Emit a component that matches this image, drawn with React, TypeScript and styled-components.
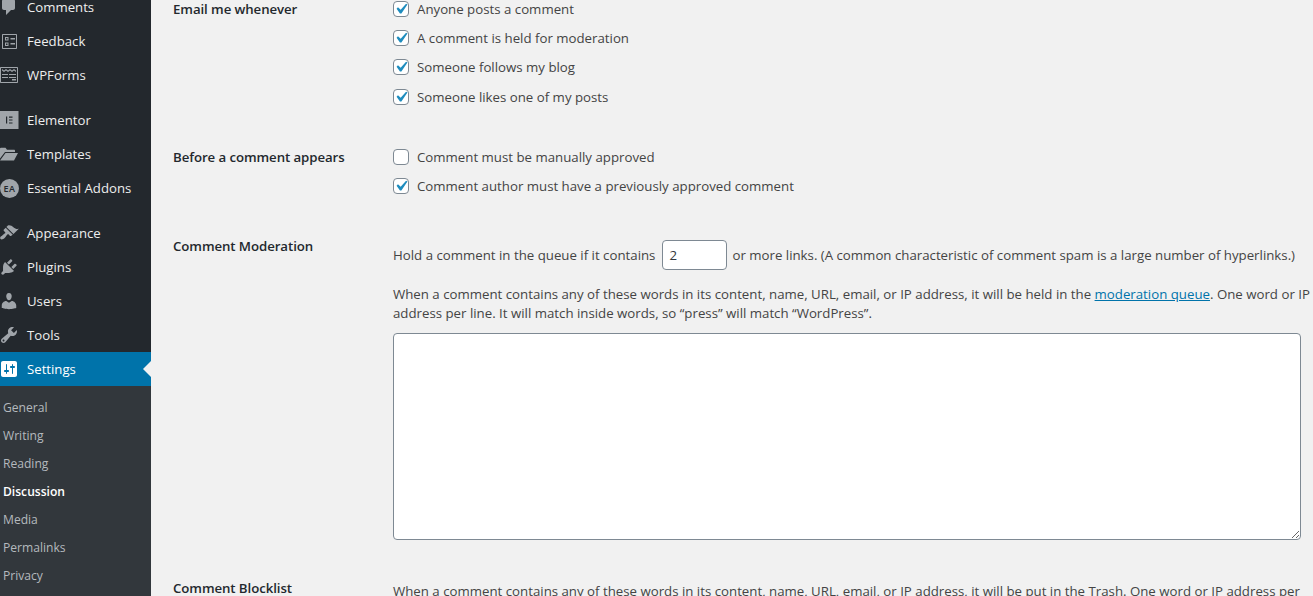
import React from "react";
import styled, { createGlobalStyle } from "styled-components";

const GlobalStyle = createGlobalStyle`
    html, body {
        margin: 0;
        height: 100%;
        overflow: hidden;
        background: #f1f1f1;
    }
    body {
        font-family: "Open Sans", "Noto Sans", sans-serif;
        font-size: 13.25px;
        color: #444;
    }
`;

const ICON_COLOR = "#a0a5aa";

const icons: Record<string, React.ReactNode> = {
    comments: <path d="M5 2h9c1.1 0 2 .9 2 2v7c0 1.1-.9 2-2 2h-2l-5 5v-5H5c-1.1 0-2-.9-2-2V4c0-1.1.9-2 2-2z" />,
    feedback: (
        <path
            fillRule="evenodd"
            d="M4 3h13c.6 0 1 .4 1 1v13c0 .6-.4 1-1 1H4c-.6 0-1-.4-1-1V4c0-.6.4-1 1-1zm0 1v13h13V4H4zm2 2h3.500v3.500H6V6zm1 1v1.500h1.500V7H7zm4.500 0H16v1.500h-4.500V7zM6 11.500h3.500V15H6v-3.500zm1 1V14h1.500v-1.500H7zm4.500-.5H16v1.500h-4.500V12z"
        />
    ),
    wpforms: (
        <path
            fillRule="evenodd"
            d="M2 2h16c.6 0 1 .4 1 1v14c0 .6-.4 1-1 1H2c-.6 0-1-.4-1-1V3c0-.6.4-1 1-1zm0 1v14h16V3H2zm1 1l2 1.600L7 4l2 1.600L11 4l2 1.600L15 4l2 1.600V7l-2-1.400L13 7l-2-1.400L9 7 7 5.600 5 7 3 5.600V4zm0 5h6v1H3V9zm7 0h7v1h-7V9zm-7 3h6v1H3v-1zm7 0h7v1h-7v-1zm3 2h4v1.500h-4V14z"
        />
    ),
    elementor: (
        <path
            fillRule="evenodd"
            d="M0 1h19.500v18H0V1zm7 5.500v7h1.200v-7H7zm3 0v1.200h3.500V6.500H10zm0 2.900v1.200h3.500V9.400H10zm0 3v1.100h3.500v-1.100H10z"
        />
    ),
    templates: (
        <path d="M1 4.500C1 4 1.400 3.700 2 3.700h4.500l1.500 2h7c.6 0 1 .4 1 1V8H6l-5 6.500V4.500zM6.500 9H19l-4 7.500H1L6.500 9z" />
    ),
    appearance: (
        <path d="M14.480 11.060L7.410 3.990l1.500-1.500c.5-.56 2.300-.47 3.510.32 1.210.8 1.430 1.280 2.910 2.100 1.180.64 2.450 1.260 4.450.85zm-.71.71L6.700 4.700 4.930 6.470c-.39.39-.39 1.020 0 1.410l1.060 1.060c.39.39.39 1.030 0 1.420-.6.6-1.430 1.110-2.210 1.690-.35.26-.7.53-1.010.84C1.430 13.080.59 15.030 1.560 16s2.920.13 4.280-1.210c.31-.31.58-.66.84-1.010.58-.78 1.090-1.610 1.690-2.210.39-.39 1.030-.39 1.420 0l1.060 1.060c.39.39 1.020.39 1.410 0z" />
    ),
    plugins: (
        <path d="M13.110 4.360L9.870 7.600 8 5.730l3.240-3.240c.35-.34 1.050-.2 1.560.32.52.51.66 1.210.31 1.550zm-8 1.770l.91-1.120 9.010 9.010-1.190.84c-.71.71-2.630 1.160-3.820 1.160H6.140L4.900 17.260c-.59.59-1.540.59-2.120 0-.59-.58-.59-1.530 0-2.120l1.240-1.240v-3.880c0-1.130.4-3.190 1.090-3.890zm7.260 3.970l3.240-3.240c.34-.35 1.040-.21 1.550.31.52.51.66 1.210.31 1.550l-3.240 3.250z" />
    ),
    users: (
        <path d="M10 9.250c-2.270 0-2.730-3.440-2.730-3.440C7 4.020 7.820 2 9.970 2c2.160 0 2.980 2.020 2.710 3.810 0 0-.41 3.440-2.680 3.440zm0 2.570L12.720 10c2.390 0 4.520 2.330 4.520 4.530v2.490s-3.650 1.130-7.240 1.130c-3.650 0-7.240-1.130-7.240-1.130v-2.490c0-2.250 1.940-4.480 4.470-4.480z" />
    ),
    tools: (
        <path d="M16.680 9.770c-1.340 1.340-3.300 1.670-4.950.99l-5.410 6.520c-.99.99-2.590.99-3.580 0s-.99-2.590 0-3.570l6.520-5.420c-.68-1.650-.35-3.610.99-4.950 1.280-1.280 3.120-1.620 4.720-1.060l-2.890 2.890 2.820 2.820 2.860-2.870c.53 1.580.18 3.390-1.080 4.650zM3.810 16.210c.4.39 1.040.39 1.430 0 .4-.4.4-1.040 0-1.430-.39-.4-1.030-.4-1.430 0-.39.39-.39 1.030 0 1.430z" />
    ),
    settings: (
        <path
            fillRule="evenodd"
            d="M18 16V4c0-1.100-.9-2-2-2H4c-1.100 0-2 .9-2 2v12c0 1.100.9 2 2 2h12c1.100 0 2-.9 2-2zM8 11h1c.55 0 1 .45 1 1s-.45 1-1 1H8v1.500c0 .28-.22.5-.5.5s-.5-.22-.5-.5V13H6c-.55 0-1-.45-1-1s.45-1 1-1h1V5.500c0-.28.22-.5.5-.5s.5.22.5.5V11zm5-2h-1c-.55 0-1-.45-1-1s.45-1 1-1h1V5.500c0-.28.22-.5.5-.5s.5.22.5.5V7h1c.55 0 1 .45 1 1s-.45 1-1 1h-1v5.500c0 .28-.22.5-.5.5s-.5-.22-.5-.5V9z"
        />
    ),
};

const menuTop = [
    { id: "comments", label: "Comments" },
    { id: "feedback", label: "Feedback" },
    { id: "wpforms", label: "WPForms" },
];
const menuMiddle = [
    { id: "elementor", label: "Elementor" },
    { id: "templates", label: "Templates" },
    { id: "addons", label: "Essential Addons" },
];
const menuBottom = [
    { id: "appearance", label: "Appearance" },
    { id: "plugins", label: "Plugins" },
    { id: "users", label: "Users" },
    { id: "tools", label: "Tools" },
    { id: "settings", label: "Settings", active: true },
];
const subItems = ["General", "Writing", "Reading", "Discussion", "Media", "Permalinks", "Privacy"];

type MenuEntry = { id: string; label: string; active?: boolean };

const MenuGroup: React.FC<{ items: MenuEntry[] }> = ({ items }) => (
    <MenuList>
        {items.map(item => (
            <MenuItem key={item.id} $active={item.active}>
                {item.id === "addons" ? (
                    <AddonBadge>EA</AddonBadge>
                ) : (
                    <MenuIcon viewBox="0 0 20 20" $active={item.active}>
                        {icons[item.id]}
                    </MenuIcon>
                )}
                {item.label}
            </MenuItem>
        ))}
    </MenuList>
);

const CheckOption: React.FC<{ label: string; checked?: boolean }> = ({ label, checked }) => (
    <OptionRow>
        <CheckBox type="checkbox" defaultChecked={checked} />
        {label}
    </OptionRow>
);

const App: React.FC = () => (
    <Page>
        <GlobalStyle />
        <Sidebar>
            <MenuGroup items={menuTop} />
            <MenuGroup items={menuMiddle} />
            <MenuGroup items={menuBottom} />
            <SubMenu>
                {subItems.map(item => (
                    <SubItem key={item} $current={item === "Discussion"}>
                        {item}
                    </SubItem>
                ))}
            </SubMenu>
        </Sidebar>
        <Main>
            <SettingRow $after={31.13}>
                <RowLabel $inset={4.6}>Email me whenever</RowLabel>
                <div>
                    <CheckOption label="Anyone posts a comment" checked />
                    <CheckOption label="A comment is held for moderation" checked />
                    <CheckOption label="Someone follows my blog" checked />
                    <CheckOption label="Someone likes one of my posts" checked />
                </div>
            </SettingRow>
            <SettingRow $after={35.27}>
                <RowLabel $inset={4.6}>Before a comment appears</RowLabel>
                <div>
                    <CheckOption label="Comment must be manually approved" />
                    <CheckOption label="Comment author must have a previously approved comment" checked />
                </div>
            </SettingRow>
            <SettingRow $after={38}>
                <RowLabel>Comment Moderation</RowLabel>
                <FieldColumn>
                    <InlineLine>
                        Hold a comment in the queue if it contains
                        <NumberInput type="text" defaultValue="2" />
                        or more links. (A common characteristic of comment spam is a large number of hyperlinks.)
                    </InlineLine>
                    <Description>
                        When a comment contains any of these words in its content, name, URL, email, or IP address, it
                        will be held in the <QueueLink href="#">moderation queue</QueueLink>. One word or IP address per
                        line. It will match inside words, so “press” will match “WordPress”.
                    </Description>
                    <WordList />
                </FieldColumn>
            </SettingRow>
            <SettingRow $after={0}>
                <RowLabel>Comment Blocklist</RowLabel>
                <FieldColumn>
                    <BlocklistText>
                        When a comment contains any of these words in its content, name, URL, email, or IP address, it
                        will be put in the Trash. One word or IP address per line.
                    </BlocklistText>
                </FieldColumn>
            </SettingRow>
        </Main>
    </Page>
);

export default App;

/* ~~~~~~ -- styling -- ~~~~~~ */

const Page = styled.div`
    display: flex;
    width: 1313px;
    height: 596px;
    overflow: hidden;
`;

const Sidebar = styled.nav`
    flex: 0 0 151px;
    background: #23282d;
    margin-top: -10px;
`;

const MenuList = styled.div`
    margin-bottom: 11px;
    &:nth-child(3) {
        margin-bottom: 0;
    }
`;

const MenuItem = styled.div<{ $active?: boolean }>`
    position: relative;
    display: flex;
    align-items: center;
    height: 34px;
    padding-left: 27px;
    padding-bottom: 1px;
    box-sizing: border-box;
    font-size: 13.2px;
    color: ${props => (props.$active ? "#fff" : "#eee")};
    background: ${props => (props.$active ? "#0073aa" : "transparent")};
    &::after {
        content: "";
        display: ${props => (props.$active ? "block" : "none")};
        position: absolute;
        right: 0;
        top: 9px;
        border: 8px solid transparent;
        border-right-color: #f1f1f1;
        border-left-width: 0;
    }
`;

const MenuIcon = styled.svg<{ $active?: boolean }>`
    position: absolute;
    left: -1px;
    top: 7px;
    width: 20px;
    height: 20px;
    fill: ${props => (props.$active ? "#fff" : ICON_COLOR)};
`;

const AddonBadge = styled.span`
    position: absolute;
    left: 0;
    top: 8px;
    width: 19px;
    height: 19px;
    border-radius: 50%;
    background: ${ICON_COLOR};
    color: #23282d;
    font-size: 9px;
    font-weight: 600;
    letter-spacing: 0.5px;
    line-height: 19px;
    text-align: center;
`;

const SubMenu = styled.div`
    background: #32373c;
    padding: 8px 0 6px;
`;

const SubItem = styled.div<{ $current?: boolean }>`
    height: 28px;
    line-height: 28px;
    padding-left: 3px;
    font-size: 12.1px;
    color: ${props => (props.$current ? "#fff" : "#b4b9be")};
    font-weight: ${props => (props.$current ? 600 : 400)};
`;

const Main = styled.main`
    flex: 1;
    min-width: 0;
    padding-left: 22px;
    margin-top: -5.6px;
`;

const SettingRow = styled.section<{ $after: number }>`
    display: grid;
    grid-template-columns: 220px 920px;
    margin-bottom: ${props => props.$after}px;
`;

const RowLabel = styled.div<{ $inset?: number }>`
    padding-top: ${props => props.$inset ?? 0}px;
    line-height: 20px;
    font-weight: 600;
    letter-spacing: -0.08px;
    color: #23282d;
`;

const FieldColumn = styled.div`
    padding-top: 4px;
`;

const OptionRow = styled.label`
    display: flex;
    align-items: center;
    gap: 8px;
    height: 29.2px;
`;

const CheckBox = styled.input`
    appearance: none;
    flex: none;
    box-sizing: border-box;
    width: 16px;
    height: 16px;
    margin: 0;
    border: 1px solid #7e8993;
    border-radius: 4px;
    background-color: #fff;
    background-position: center;
    background-repeat: no-repeat;
    background-size: 21px 21px;
    &:checked {
        background-image: url("data:image/svg+xml;utf8,%3Csvg xmlns='http://www.w3.org/2000/svg' viewBox='0 0 20 20'%3E%3Cpath d='M14.83 4.89l1.34.94-5.81 8.38H9.02L5.78 9.67l1.34-1.25 2.57 2.4z' fill='%231e8cbe'/%3E%3C/svg%3E");
    }
`;

const InlineLine = styled.div`
    display: flex;
    align-items: center;
    height: 30px;
    white-space: nowrap;
`;

const NumberInput = styled.input`
    box-sizing: border-box;
    width: 65px;
    height: 30px;
    margin: 0 5px 0 7px;
    padding: 0 6px;
    border: 1px solid #7e8993;
    border-radius: 4px;
    background: #fff;
    color: #32373c;
    font: inherit;
`;

const Description = styled.p`
    margin: 15.5px 0 9.5px;
    line-height: 19px;
`;

const QueueLink = styled.a`
    color: #0073aa;
`;

const WordList = styled.textarea`
    display: block;
    box-sizing: border-box;
    width: 908px;
    height: 207px;
    margin: 0;
    border: 1px solid #7e8993;
    border-radius: 4px;
    background: #fff;
`;

const BlocklistText = styled.p`
    margin: 0;
    line-height: 19px;
`;
